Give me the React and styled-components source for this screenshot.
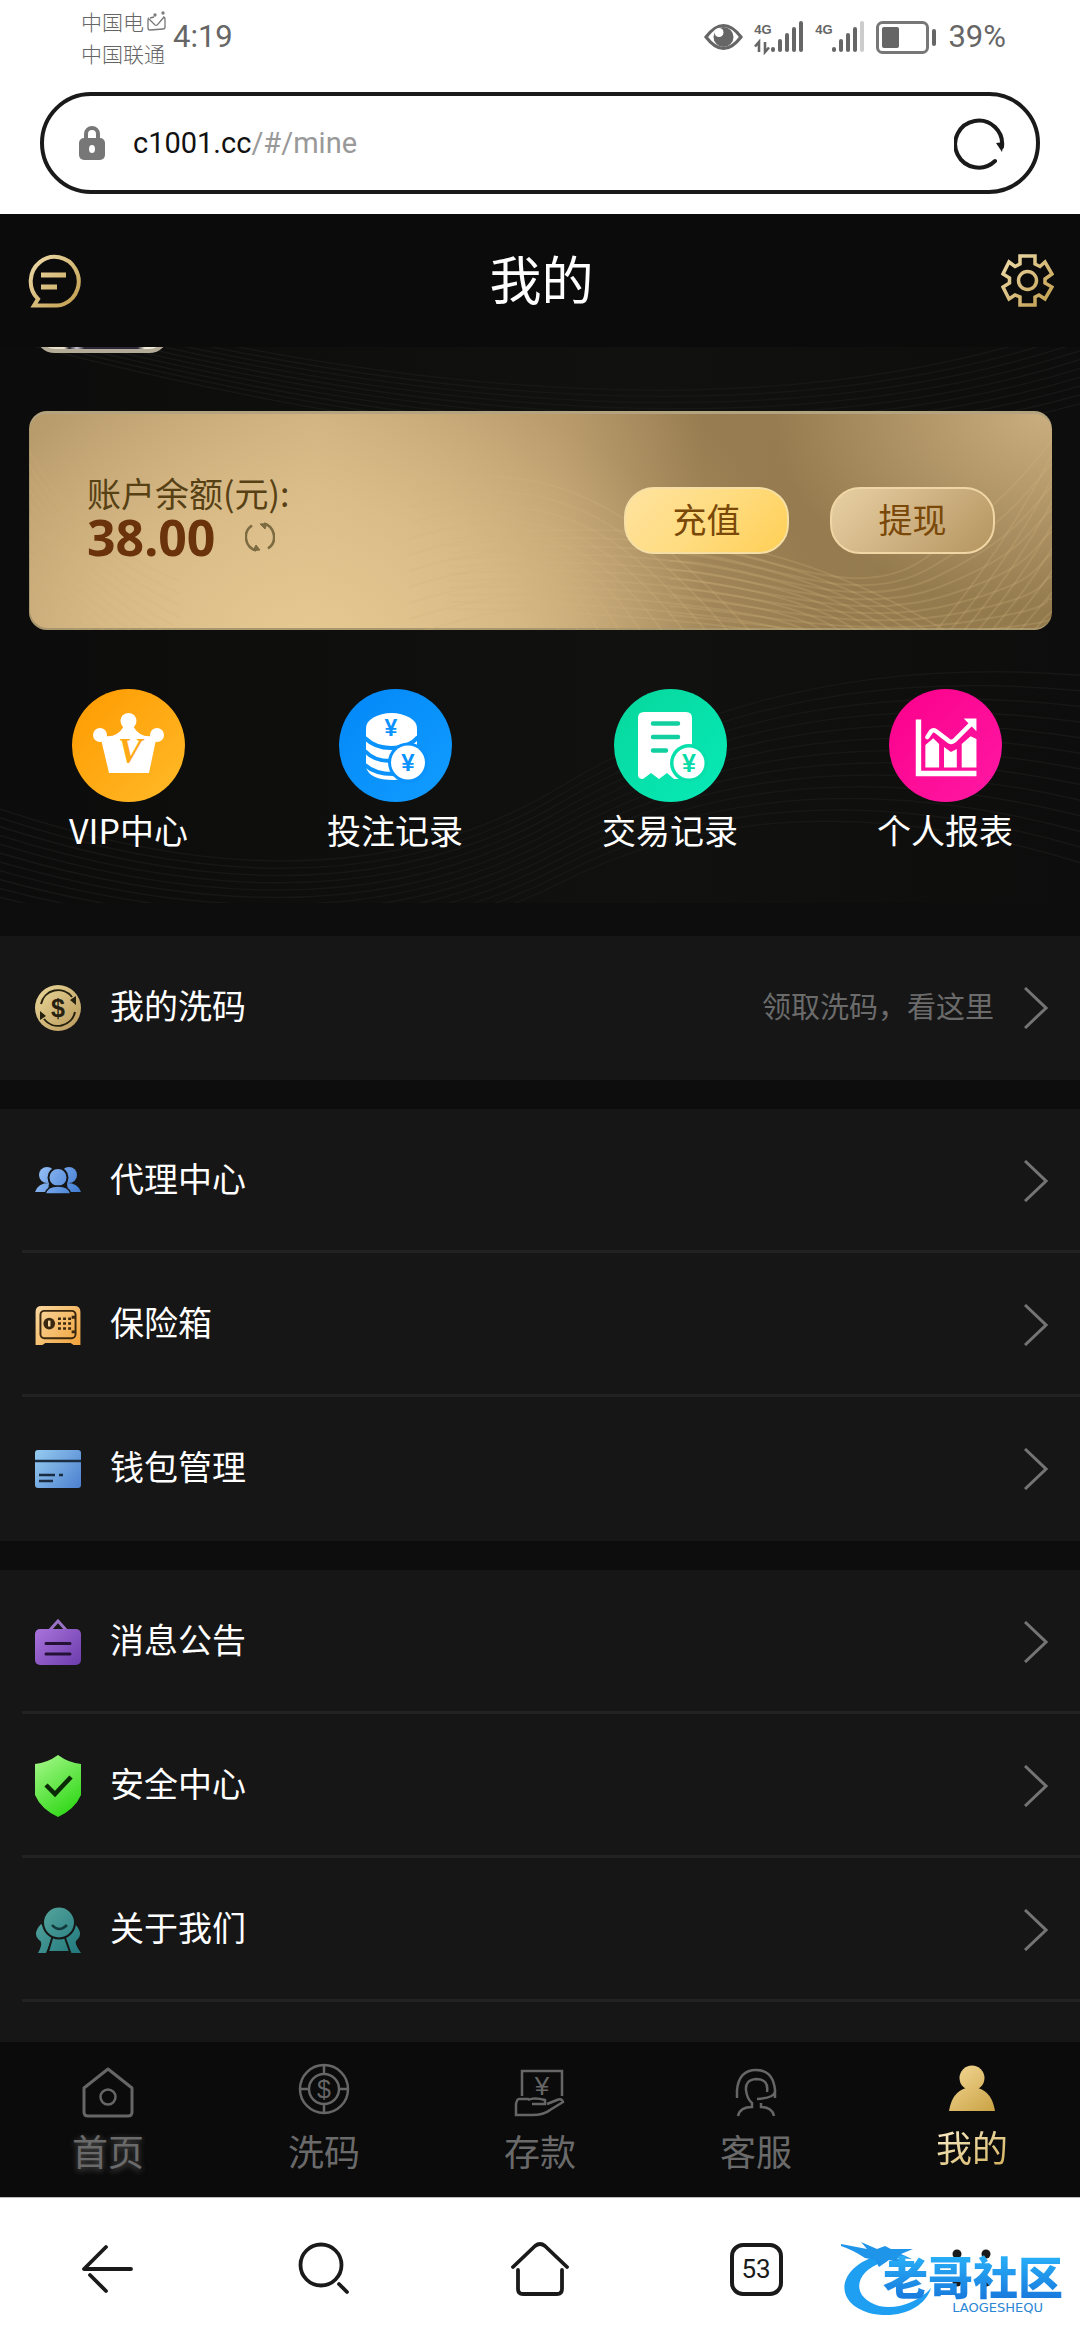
import React, { useId } from "react";
import styled, { createGlobalStyle, css } from "styled-components";

const Global = createGlobalStyle`
  * { box-sizing: border-box; }
  body {
    margin: 0;
    background: #fff;
    font-family: "Noto Sans CJK SC", "Noto Sans", sans-serif;
  }
  button { font: inherit; border: 0; padding: 0; background: none; cursor: pointer; }
  a { color: inherit; text-decoration: none; }
  svg { display: block; flex: none; }
`;

const Screen = styled.div`
  height: 100vh;
  display: flex;
  flex-direction: column;
  background: #fff;
`;

/* ---------- phone status bar ---------- */

const thin = css`
  font-family: Roboto, "Liberation Sans", "Noto Sans CJK SC", sans-serif;
  font-weight: 400;
`;

const StatusBar = styled.div`
  display: flex;
  align-items: center;
  height: 74px;
  padding: 0 74px 0 81px;
  color: #666;
`;

const Carriers = styled.div`
  display: grid;
  font-size: 21px;
  line-height: 32px;
  font-weight: 300;
`;

const Carrier = styled.span`
  display: flex;
  align-items: center;
  gap: 3px;
`;

const Clock = styled.time`
  ${thin}
  margin-left: 7px;
  margin-right: auto;
  font-size: 31px;
  line-height: 40px;
`;

const StatusIcons = styled.div`
  display: flex;
  align-items: center;
  gap: 11px;
`;

const Percent = styled.span`
  ${thin}
  font-size: 31px;
  line-height: 40px;
`;

/* ---------- address bar ---------- */

const AddressRow = styled.div`
  padding: 18px 40px 20px;
`;

const AddressBar = styled.div`
  display: flex;
  align-items: center;
  justify-content: space-between;
  height: 102px;
  padding: 0 30px 0 35px;
  border: 4px solid #1a1a1a;
  border-radius: 51px;
`;

const Address = styled.button`
  ${thin}
  flex: 1;
  display: flex;
  align-items: center;
  gap: 28px;
  font-size: 29px;
  line-height: 48px;
  color: #999;
  text-align: left;
`;

const Host = styled.span`
  color: #111;
`;

/* ---------- site header ---------- */

const SiteHeader = styled.header`
  display: flex;
  align-items: center;
  justify-content: space-between;
  height: 133px;
  flex: none;
  padding: 0 26px 0 28px;
  background: #0b0b0b;
  color: #fff;
`;

const Title = styled.h1`
  margin: 0;
  padding-bottom: 6px;
  font-size: 52px;
  line-height: 60px;
  font-weight: 400;
`;

/* ---------- scrolling content ---------- */

const Content = styled.main`
  flex: 1;
  min-height: 0;
  overflow: hidden;
  background: #0d0d0d;
  color: #fff;
`;

const Hero = styled.section`
  position: relative;
  margin-bottom: 33px;
  padding: 0 28px 53px 29px;
  background: linear-gradient(90deg, #0c0c0c, #11110f 60%, #0d0d0d);
`;

const Waves = styled.svg`
  position: absolute;
  inset: 0;
  width: 100%;
  height: 100%;
`;

const Profile = styled.div`
  position: relative;
  display: flex;
  align-items: flex-end;
  height: 6px;
  margin-bottom: 58px;
  padding-left: 6px;
  overflow: hidden;
`;

const Avatar = styled.div`
  width: 134px;
  height: 80px;
  flex: none;
  border: 4px solid #b3ab98;
  border-radius: 20px;
  background: linear-gradient(90deg, #e8e0c8 20%, #221f2e 24%, #c8c4d0 30%, #2a2738 36%, #2a2738 78%, #f0ead8 84%);
`;

const Card = styled.div`
  position: relative;
  display: flex;
  align-items: center;
  height: 219px;
  padding: 0 57px 0 58px;
  border-radius: 18px;
  overflow: hidden;
  box-shadow: inset 0 3px 0 #b3a37f, inset 1px -2px 0 #a8966c;
  background:
    radial-gradient(520px 340px at 27% 105%, #e6c892 0%, rgba(226, 196, 143, 0.7) 40%, rgba(200, 170, 120, 0.2) 80%, rgba(190, 160, 110, 0) 100%),
    radial-gradient(280px 200px at 100% 0%, #ccaf80 0%, rgba(204, 175, 128, 0) 100%),
    linear-gradient(90deg, #b59868 0%, #ceb180 28%, #b69869 52%, #967c50 66%, #937a4d 100%);
`;

const Balance = styled.div`
  position: relative;
  flex: 1;
  padding-bottom: 8px;
  color: #574114;
`;

const BalanceLabel = styled.div`
  font-size: 34px;
  line-height: 40px;
  font-weight: 400;
`;

const BalanceRow = styled.div`
  display: flex;
  align-items: center;
  gap: 30px;
`;

const Amount = styled.strong`
  font-family: "Noto Sans", "Open Sans", sans-serif;
  font-size: 50px;
  line-height: 48px;
  font-weight: 700;
  color: #6b330b;
`;

const CardActions = styled.div`
  position: relative;
  display: flex;
  gap: 41px;
`;

const CardButton = styled.button`
  width: 165px;
  height: 67px;
  padding-bottom: 4px;
  border: 2px solid ${(p) => (p.$bright ? "#f6dfa4" : "#f0d6a4")};
  border-radius: 30px;
  background: ${(p) =>
    p.$bright
      ? "linear-gradient(135deg, #ffe3a0, #ffdc80 50%, #ffcf55)"
      : "linear-gradient(135deg, #e8d0a4, #cfb283 50%, #b4955f)"};
  color: #7a4808;
  font-size: 34px;
  line-height: 40px;
`;

const Shortcuts = styled.nav`
  position: relative;
  display: flex;
  justify-content: space-between;
  padding: 59px 39px 0 40px;
`;

const Shortcut = styled.a`
  display: flex;
  flex-direction: column;
  align-items: center;
  gap: 8px;
  font-size: 34px;
  line-height: 40px;
`;

const Group = styled.section`
  margin-bottom: 29px;
  background: #161616;
`;

const Row = styled.a`
  display: flex;
  align-items: center;
  height: 144px;
  padding-right: 32px;
  padding-left: 35px;
  background: ${(p) =>
    p.$line ? "linear-gradient(#222, #222) 22px 100% / 100% 3px no-repeat" : "none"};
`;

const RowIcon = styled.span`
  display: flex;
  width: 46px;
  margin-right: 29px;
`;

const RowLabel = styled.span`
  flex: 1;
  padding-bottom: 6px;
  font-size: 34px;
  line-height: 40px;
`;

const RowNote = styled.span`
  margin-right: 30px;
  padding-bottom: 6px;
  color: #6b6b6b;
  font-size: 29px;
  line-height: 40px;
`;

/* ---------- tab bar and browser bar ---------- */

const TabBar = styled.nav`
  display: grid;
  grid-template-columns: repeat(5, 1fr);
  height: 155px;
  flex: none;
  background: #0b0b0b;
`;

const Tab = styled.a`
  display: flex;
  flex-direction: column;
  align-items: center;
  gap: ${(p) => (p.$active ? 4 : 8)}px;
  padding-top: 20px;
  color: #6a6a6a;
  font-size: 36px;
  line-height: 40px;
`;

const TabLabel = styled.span`
  ${(p) => p.$glow && "text-shadow: 0 2px 6px #555;"}
  ${(p) =>
    p.$active &&
    css`
      background: linear-gradient(150deg, #fbf0cf, #d3b15c);
      background-clip: text;
      color: transparent;
    `}
`;

const BrowserBar = styled.nav`
  position: relative;
  display: grid;
  grid-template-columns: repeat(5, 1fr);
  place-items: center;
  height: 143px;
  flex: none;
  border-top: 1px solid #bbb;
`;

const TabCount = styled.button`
  ${thin}
  width: 53px;
  height: 53px;
  border: 4px solid #1a1a1a;
  border-radius: 13px;
  font-size: 26px;
  line-height: 40px;
  color: #1a1a1a;
`;

const Watermark = styled.div`
  position: absolute;
  right: 17px;
  top: 44px;
  display: flex;
  width: 222px;
  height: 74px;
`;

const Dragon = styled.svg`
  position: absolute;
  left: 0;
  top: 0;
`;

const MarkText = styled.div`
  position: relative;
  margin-left: auto;
  padding-top: 10px;
  text-align: right;
`;

const MarkName = styled.div`
  font-size: 45px;
  line-height: 48px;
  font-weight: 900;
  background: linear-gradient(#2ab4fa, #1878dc);
  background-clip: text;
  color: transparent;
`;

const MarkLatin = styled.div`
  padding-right: 20px;
  font-family: "DejaVu Sans", sans-serif;
  font-size: 13px;
  line-height: 16px;
  color: #2b86d4;
`;

/* ---------- drawings ---------- */

function Icon({ w, h, box, colors, children, ...rest }) {
  const id = useId();
  const paint = `url(#${id})`;
  return (
    <svg width={w} height={h} viewBox={box || `0 0 ${w} ${h}`} fill="none" aria-hidden="true" {...rest}>
      {colors && (
        <defs>
          <linearGradient id={id} x1="0" y1="0" x2={w} y2={h} gradientUnits="userSpaceOnUse">
            <stop offset="0" stopColor={colors[0]} />
            <stop offset="1" stopColor={colors[1]} />
          </linearGradient>
        </defs>
      )}
      {typeof children === "function" ? children(paint) : children}
    </svg>
  );
}

const SymbolText = ({ x, y, size, fill, children, ...rest }) => (
  <text x={x} y={y} fontSize={size} fill={fill} textAnchor="middle" fontFamily="Liberation Sans, sans-serif" {...rest}>
    {children}
  </text>
);

const GOLD = ["#f0dfb0", "#bf9a48"];

const Envelope = () => (
  <Icon w={19} h={20} stroke="#777" strokeWidth="1.3">
    <path d="M2 7Q1 7 1 9V17Q1 19 3 19L16 18Q18 18 18 16V8Q18 6 16 6M2 8L8 14Q10 15 11 13L17 6M3 7L7 6" />
    <circle cx="8" cy="4" r="1" />
    <circle cx="16" cy="2" r="1" />
  </Icon>
);

const Eye = () => (
  <Icon w={39} h={28}>
    <path d="M2 14Q19.500 -9 37 14Q19.500 37 2 14Z" stroke="#666" strokeWidth="3.200" />
    <circle cx="19.500" cy="14" r="10" fill="#666" />
    <circle cx="15" cy="9.500" r="4.500" fill="#fff" />
  </Icon>
);

const Signal = ({ arrows, weak }) => (
  <Icon w={50} h={36}>
    <SymbolText x={9} y={15} size={13} fill="#666" fontWeight="700">
      4G
    </SymbolText>
    {arrows && <path d="M5 33V23L1 27.500M11 23V33L15 28.500" stroke="#666" strokeWidth="2.600" />}
    {[5, 13, 19, 25, 31].map((h, i) => (
      <rect key={h} x={17 + i * 7} y={33 - h} width="4" height={h} rx="2" fill={weak && i === 4 ? "#ccc" : "#666"} />
    ))}
  </Icon>
);

const Battery = () => (
  <Icon w={61} h={33}>
    <rect x="1.500" y="1.500" width="50" height="30" rx="5" stroke="#777" strokeWidth="3" />
    <rect x="6" y="6" width="17" height="21" rx="2" fill="#666" />
    <rect x="56" y="8" width="4" height="17" rx="2" fill="#666" />
  </Icon>
);

const Lock = () => (
  <Icon w={26} h={34}>
    <path d="M7 14V8A6 6 0 0 1 19 8V14" stroke="#777" strokeWidth="4" />
    <rect x="0" y="12" width="26" height="22" rx="5" fill="#777" />
    <ellipse cx="13" cy="23" rx="3" ry="4" fill="#fff" />
  </Icon>
);

const Reload = () => (
  <Icon w={52} h={54}>
    <path d="M41 45A23.500 23.500 0 1 1 48 31" stroke="#1a1a1a" strokeWidth="4" strokeLinecap="round" />
    <path d="M42 27L50 26L48 36Z" fill="#1a1a1a" />
  </Icon>
);

const Chat = () => (
  <Icon w={54} h={55} colors={GOLD}>
    {(g) => (
      <g stroke={g} strokeWidth="4">
        <path d="M6 52.500L10 46A24 24.500 0 1 1 36 51Q33 52.500 29 52.500Z" />
        <path d="M13 22H38M13 34H29" strokeWidth="5" />
      </g>
    )}
  </Icon>
);

const Gear = () => (
  <Icon w={53} h={53} colors={GOLD}>
    {(g) => (
      <g stroke={g} strokeWidth="3.500">
        <path d="M19 2H34V10L39 12.500L44 8L51 20L44 25V29L51 33L44 45L38 41L34 43V51H19V43L14 41L8 45L2 33L8.500 29V24L2 20L8 8L14 12.500L19 10Z" />
        <circle cx="26.500" cy="26.500" r="9" />
      </g>
    )}
  </Icon>
);

const Refresh = () => (
  <Icon w={30} h={30} stroke="#7d6b42" strokeWidth="2.600">
    <path d="M7 3.500A14 14 0 0 0 11 28.500M23 26.500A14 14 0 0 0 19 1.500" />
    <path d="M15 2L22 1.500L20 7ZM15 28L8 28.500L11 23Z" fill="#7d6b42" strokeWidth="1" />
  </Icon>
);

const Crown = () => (
  <Icon w={113} h={113} colors={["#ff9a00", "#ffba28"]}>
    {(g) => (
      <>
        <circle cx="56.500" cy="56.500" r="56.500" fill={g} />
        <g fill="#fff">
          <circle cx="56.500" cy="32" r="8" />
          <circle cx="28" cy="46" r="7" />
          <circle cx="85" cy="46" r="7" />
          <path d="M28 46Q44 51 52 37H61Q69 51 85 46L77 84H37Z" />
        </g>
        <text x="58" y="74" fontSize="36" fontWeight="700" fontStyle="italic" textAnchor="middle" fontFamily="Liberation Serif, serif" fill="#ffa914">
          V
        </text>
      </>
    )}
  </Icon>
);

const Coins = () => (
  <Icon w={113} h={113} colors={["#0288f8", "#129cff"]}>
    {(g) => (
      <>
        <circle cx="56.500" cy="56.500" r="56.500" fill={g} />
        <path d="M27 40V78Q30 91 55 91Q78 90 78 78V40Z" fill="#fff" />
        <path d="M26 49Q36 59 52 59Q70 59 79 48M26 62Q36 73 54 72M26 76Q36 85 54 85" stroke="#0a92fd" strokeWidth="4" />
        <ellipse cx="52.500" cy="39" rx="25.500" ry="15" fill="#fff" />
        <circle cx="69" cy="73.500" r="20" fill="#0a92fd" />
        <circle cx="69" cy="73.500" r="17" fill="#fff" />
        <SymbolText x={52} y={47} size={23} fill="#0a92fd" fontWeight="700">¥</SymbolText>
        <SymbolText x={69} y={82} size={24} fill="#0a92fd" fontWeight="700">¥</SymbolText>
      </>
    )}
  </Icon>
);

const Receipt = () => (
  <Icon w={113} h={113} colors={["#06d79c", "#08eab8"]}>
    {(g) => (
      <>
        <circle cx="56.500" cy="56.500" r="56.500" fill={g} />
        <path d="M30 23H72Q78 23 78 29V80L66 90L60 90L53 84L45 90L37 84L29 90Q24 90 24 86V29Q24 23 30 23Z" fill="#fff" />
        <path d="M39 34.500H64M39 48H64M39 61.500H52" stroke="#12cfa0" strokeWidth="4.500" strokeLinecap="round" />
        <circle cx="75" cy="74" r="19" fill="#07e0ab" />
        <circle cx="75" cy="74" r="15.500" fill="#fff" />
        <SymbolText x={75} y={83} size={25} fill="#07dba8" fontWeight="700">¥</SymbolText>
      </>
    )}
  </Icon>
);

const Report = () => (
  <Icon w={113} h={113} box="0 0 115 115" colors={["#fb008a", "#ff18a4"]}>
    {(g) => (
      <>
        <circle cx="57.500" cy="57.500" r="57.500" fill={g} />
        <path d="M30 31V86H89" stroke="#fff" strokeWidth="5.500" />
        <path d="M39 49L43 43Q45 41 48 43L61 53Q64 55 67 52L84 35" stroke="#fff" strokeWidth="4.500" strokeLinecap="round" />
        <path d="M76 30H89V43Z" fill="#fff" />
        <path d="M37 80V57L45 50L51 56V80ZM56 80V59L63 64L69 61V80ZM74 80V56L83 48L89 51V80Z" fill="#fff" />
      </>
    )}
  </Icon>
);

const Dollar = () => (
  <Icon w={46} h={46} colors={["#ead89a", "#b8985a"]}>
    {(g) => (
      <>
        <circle cx="23" cy="23" r="23" fill={g} />
        <path d="M6 19A17.500 17.500 0 0 1 37 12M40 27A17.500 17.500 0 0 1 9 34" stroke="#26200f" strokeWidth="2" />
        <path d="M41 11V20L35 15ZM5 35V26L11 31Z" fill="#26200f" />
        <SymbolText x={23} y={32} size={25} fill="#26200f" fontWeight="700">$</SymbolText>
      </>
    )}
  </Icon>
);

const Team = () => (
  <Icon w={46} h={28} colors={["#9cc4f8", "#3c78d0"]}>
    {(g) => (
      <g fill={g}>
        <circle cx="12" cy="8" r="8" />
        <circle cx="34" cy="8" r="8" />
        <path d="M0 25Q3 16 14 16L13 25ZM46 25Q43 16 32 16L33 25Z" />
        <circle cx="23" cy="10.500" r="9.500" stroke="#161616" strokeWidth="2" />
        <path d="M10 27Q12 19 23 19Q34 19 36 27Z" stroke="#161616" strokeWidth="1.500" />
      </g>
    )}
  </Icon>
);

const Safe = () => (
  <Icon w={46} h={39} box="0 0 46 40" colors={["#f8d8a0", "#f2a43c"]}>
    {(g) => (
      <>
        <path d="M6 0H40Q46 0 46 6V40H39L36 38H10L7 40H0V6Q0 0 6 0Z" fill={g} />
        <rect x="5" y="5" width="36" height="28" rx="4" stroke="#3a2810" strokeWidth="2" />
        <circle cx="14" cy="18" r="6" fill="#3a2810" />
        <path d="M14 15V21" stroke="#f8d8a0" strokeWidth="2.500" />
        <path d="M23 13H37M23 18H37M23 23H37" stroke="#3a2810" strokeWidth="2.500" strokeDasharray="3 2.200" />
        <path d="M39 10V13M39 25V28" stroke="#3a2810" strokeWidth="4" />
      </>
    )}
  </Icon>
);

const Wallet = () => (
  <Icon w={46} h={38} colors={["#96ccf0", "#4c80d0"]}>
    {(g) => (
      <>
        <rect width="46" height="38" rx="3" fill={g} />
        <path d="M0 11H46M4 25H20M24 25H28M4 31H18" stroke="#1b2c40" strokeWidth="2.400" />
      </>
    )}
  </Icon>
);

const Notice = () => (
  <Icon w={46} h={47} colors={["#b07ae0", "#6c3cac"]}>
    {(g) => (
      <>
        <path d="M14 12L23 2L32 12" stroke="#9a72c4" strokeWidth="3" />
        <rect y="10" width="46" height="36" rx="5" fill={g} />
        <path d="M11 24.500H35M11 35H35" stroke="#241236" strokeWidth="3" strokeLinecap="round" />
      </>
    )}
  </Icon>
);

const Shield = () => (
  <Icon w={46} h={62} colors={["#a8f88c", "#20d408"]}>
    {(g) => (
      <>
        <path d="M23 0Q34 8 46 9V40Q40 54 23 62Q6 54 0 40V9Q12 8 23 0Z" fill={g} />
        <path d="M11 30L20 39L36 22" stroke="#0b2a06" strokeWidth="4.500" />
      </>
    )}
  </Icon>
);

const About = () => (
  <Icon w={46} h={46} colors={["#5aa8a0", "#20787c"]}>
    {(g) => (
      <>
        <path d="M6 17Q-3 27 4 33Q9 35 3 46H11L18 29ZM40 17Q49 27 42 33Q38 35 46 46H36L28 29Z" fill={g} />
        <path d="M18 28L13 45H35L29 28Z" fill={g} stroke="#161616" strokeWidth="2" />
        <circle cx="24" cy="15.500" r="16" fill={g} stroke="#161616" strokeWidth="2" />
        <path d="M17 18Q24 26 32 18" stroke="#123a3c" strokeWidth="2.500" />
      </>
    )}
  </Icon>
);

const Chevron = () => (
  <Icon w={24} h={42} stroke="#747474" strokeWidth="3">
    <path d="M1 1L22 21L1 41" />
  </Icon>
);

const TabHome = () => (
  <Icon w={52} h={60} stroke="#666" strokeWidth="3">
    <path d="M26 7L50 26V50Q50 54 46 54H6Q2 54 2 50V26Z" strokeLinejoin="round" />
    <circle cx="26" cy="35" r="7.500" strokeWidth="2.500" />
  </Icon>
);

const TabChip = () => (
  <Icon w={52} h={60} stroke="#666" strokeWidth="2.500">
    <circle cx="26" cy="27" r="24" />
    <circle cx="26" cy="27" r="15" />
    <path d="M26 3V12M26 42V51M2 27H11M41 27H50" />
    <SymbolText x={26} y={36} size={25} fill="#666" stroke="none">$</SymbolText>
  </Icon>
);

const TabDeposit = () => (
  <Icon w={52} h={60} stroke="#666" strokeWidth="2.500">
    <path d="M8 34V9H48V34" />
    <path d="M15 37H5Q3 37 2 42V53H18Q30 53 36 48L49 40Q48 36 43 38L33 42M14 38Q20 35 31 38V42H18" />
    <SymbolText x={28} y={33} size={26} fill="#666" stroke="none">¥</SymbolText>
  </Icon>
);

const TabService = () => (
  <Icon w={44} h={60} stroke="#666" strokeWidth="2.500">
    <path d="M3 36V28Q5 8 22 8Q39 8 41 28V36M41 28Q42 36 23 37" />
    <path d="M33 30Q35 17 22 17Q11 18 12 28Q13 37 18 41V45Q6 45 4 54M27 41V45Q38 45 40 54" />
  </Icon>
);

const TabMine = () => (
  <Icon w={48} h={60} colors={["#f6dc9c", "#c49a38"]}>
    {(g) => (
      <g fill={g}>
        <circle cx="24" cy="16" r="12.500" />
        <path d="M18 26H30Q44 30 47 49H1Q4 30 18 26Z" />
      </g>
    )}
  </Icon>
);

const LineIcon = ({ d, w = 54, children }) => (
  <Icon w={w} h={54} stroke="#1a1a1a" strokeWidth="3.800" strokeLinecap="round" strokeLinejoin="round">
    <path d={d} />
    {children}
  </Icon>
);

const range = (n) => Array.from({ length: n }, (_, i) => i);

const HeroWaves = () => (
  <Waves viewBox="0 0 1080 556" preserveAspectRatio="none" fill="none" stroke="#171716" strokeWidth="1.500" aria-hidden="true">
    {range(13).map((i) => (
      <path key={i} d={`M-20 ${455 + i * 9}Q330 ${580 + i * 6} 560 ${440 + i * 8}T1100 ${330 + i * 16}`} />
    ))}
    {range(10).map((i) => (
      <path key={`t${i}`} d={`M-20 ${i * 5 - 60}Q680 ${130 + i * 5} 1100 ${i * 9 - 30}`} />
    ))}
  </Waves>
);

const CardWaves = () => (
  <Waves viewBox="0 0 1023 219" preserveAspectRatio="none" fill="none" stroke="#d2b47c" strokeOpacity="0.24" strokeWidth="2" aria-hidden="true">
    {range(10).map((i) => (
      <path key={`a${i}`} d={`M380 ${80 + i * 16}C${490 + i * 4} ${45 + i * 15} ${590 - i * 6} ${70 + i * 14} ${725 - i * 22} 225`} />
    ))}
    {range(11).map((i) => (
      <path key={`b${i}`} d={`M420 ${128 + i * 7}C620 ${100 + i * 10} 780 ${135 + i * 9} ${925 - i * 18} 225`} />
    ))}
    {range(9).map((i) => (
      <path key={`c${i}`} d={`M640 ${132 + i * 9}C720 ${130 + i * 10} 820 ${200 + i * 4} ${895 + i * 6} ${148 + i * 9}S1000 ${60 + i * 18} 1030 ${20 + i * 24}`} />
    ))}
    {range(8).map((i) => (
      <path key={`d${i}`} d={`M${905 + i * 14} 222Q${975 + i * 7} ${140 + i * 8} 1030 ${30 + i * 24}`} />
    ))}
    {range(12).map((i) => (
      <path key={`e${i}`} strokeOpacity="0.18" d={`M0 ${40 + i * 13}Q50 ${130 + i * 8} 150 ${170 + i * 12}`} />
    ))}
  </Waves>
);

/* ---------- data ---------- */

const shortcuts = [
  ["VIP中心", Crown],
  ["投注记录", Coins],
  ["交易记录", Receipt],
  ["个人报表", Report],
];

const groups = [
  [["我的洗码", Dollar, "领取洗码，看这里"]],
  [["代理中心", Team], ["保险箱", Safe], ["钱包管理", Wallet]],
  [["消息公告", Notice], ["安全中心", Shield], ["关于我们", About]],
];

const tabs = [
  ["首页", TabHome],
  ["洗码", TabChip],
  ["存款", TabDeposit],
  ["客服", TabService],
  ["我的", TabMine],
];

export default function App() {
  return (
    <Screen>
      <Global />
      <StatusBar>
        <Carriers>
          <Carrier>中国电<Envelope /></Carrier>
          <Carrier>中国联通</Carrier>
        </Carriers>
        <Clock>4:19</Clock>
        <StatusIcons>
          <Eye />
          <Signal arrows />
          <Signal weak />
          <Battery />
          <Percent>39%</Percent>
        </StatusIcons>
      </StatusBar>
      <AddressRow>
        <AddressBar>
          <Address type="button">
            <Lock />
            <span><Host>c1001.cc</Host>/#/mine</span>
          </Address>
          <button type="button" aria-label="刷新"><Reload /></button>
        </AddressBar>
      </AddressRow>

      <SiteHeader>
        <button type="button" aria-label="消息"><Chat /></button>
        <Title>我的</Title>
        <button type="button" aria-label="设置"><Gear /></button>
      </SiteHeader>

      <Content>
        <Hero>
          <HeroWaves />
          <Profile><Avatar /></Profile>
          <Card>
            <CardWaves />
            <Balance>
              <BalanceLabel>账户余额(元):</BalanceLabel>
              <BalanceRow>
                <Amount>38.00</Amount>
                <button type="button" aria-label="刷新余额"><Refresh /></button>
              </BalanceRow>
            </Balance>
            <CardActions>
              <CardButton type="button" $bright>充值</CardButton>
              <CardButton type="button">提现</CardButton>
            </CardActions>
          </Card>
          <Shortcuts>
            {shortcuts.map(([label, Drawing]) => (
              <Shortcut key={label} href="#">
                <Drawing />
                {label}
              </Shortcut>
            ))}
          </Shortcuts>
        </Hero>

        {groups.map((rows, g) => (
          <Group key={g}>
            {rows.map(([label, Drawing, note], i) => (
              <Row key={label} href="#" $line={g === 2 || i < rows.length - 1}>
                <RowIcon><Drawing /></RowIcon>
                <RowLabel>{label}</RowLabel>
                {note && <RowNote>{note}</RowNote>}
                <Chevron />
              </Row>
            ))}
            {g === 2 && <Row as="div" />}
          </Group>
        ))}
      </Content>

      <TabBar>
        {tabs.map(([label, Drawing], i) => (
          <Tab key={label} href="#" $active={i === 4}>
            <Drawing />
            <TabLabel $active={i === 4} $glow={i === 0}>{label}</TabLabel>
          </Tab>
        ))}
      </TabBar>

      <BrowserBar>
        <button type="button" aria-label="后退">
          <LineIcon d="M25 5L3 27H50M9 33L25 49" />
        </button>
        <button type="button" aria-label="搜索">
          <LineIcon d="M42 42L50 50">
            <circle cx="24" cy="23" r="20.500" />
          </LineIcon>
        </button>
        <button type="button" aria-label="主页">
          <LineIcon w={58} d="M2 25L24 4Q29 0 34 4L56 25M7 28V47Q7 52 12 52H46Q51 52 51 47V28" />
        </button>
        <TabCount type="button">53</TabCount>
        <button type="button" aria-label="菜单">
          <Icon w={54} h={54}>
            {[12, 40].map((y) => (
              <g key={y} fill="#1a1a1a">
                <circle cx="12" cy={y} r="4.500" />
                <circle cx="41" cy={y} r="4.500" />
              </g>
            ))}
          </Icon>
        </button>
        <Watermark>
          <Dragon width="100" height="74" viewBox="0 0 100 74" fill="none" aria-hidden="true">
            <path d="M30 16C-2 28 -8 60 28 71C58 78 84 66 90 46C78 60 56 68 38 64C10 56 12 30 42 20Z" fill="#1e9ff2" />
            <path d="M0 2L26 7L20 0L36 7L44 4L50 7L72 7L60 12L71 17L56 16L64 22L48 18L38 25L34 18L24 16Q12 8 0 4Z" fill="#1f95ea" />
          </Dragon>
          <MarkText>
            <MarkName>老哥社区</MarkName>
            <MarkLatin>LAOGESHEQU</MarkLatin>
          </MarkText>
        </Watermark>
      </BrowserBar>
    </Screen>
  );
}
